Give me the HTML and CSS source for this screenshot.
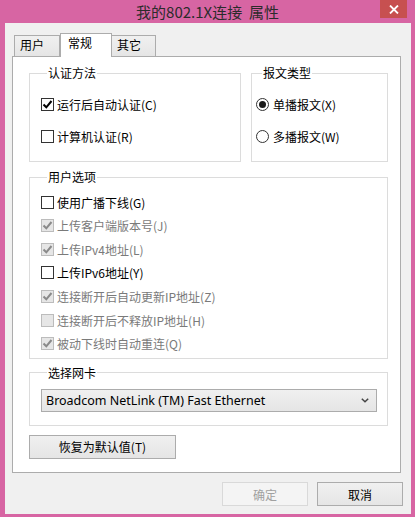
FILE: index.html
```html
<!DOCTYPE html>
<html lang="zh-CN">
<head>
<meta charset="utf-8">
<title>我的802.1X连接 属性</title>
<link rel="stylesheet" href="styles.css">
</head>
<body>
<div class="titlebar">
  <span class="title">我的802.1X连接&nbsp;&nbsp;属性</span>
  <span class="close"><svg width="10" height="9" viewBox="0 0 10 9"><path d="M1 0.5 L9 8.5 M9 0.5 L1 8.5" stroke="#fff" stroke-width="1.8" fill="none"/></svg></span>
</div>
<div class="client">
  <div class="tabs">
    <div class="tab t1">用户</div>
    <div class="tab active">常规</div>
    <div class="tab t3">其它</div>
  </div>
  <div class="panel">
    <div class="group-row">
      <fieldset class="grp auth">
        <legend>认证方法</legend>
        <div class="opts">
          <label class="opt"><span class="cb on"><svg width="11" height="11" viewBox="0 0 11 11"><path d="M1.5 5.5 L4.3 8.3 L9.5 2" stroke="#000" stroke-width="2" fill="none"/></svg></span>运行后自动认证(C)</label>
          <label class="opt"><span class="cb"></span>计算机认证(R)</label>
        </div>
      </fieldset>
      <fieldset class="grp pkt">
        <legend>报文类型</legend>
        <div class="opts">
          <label class="opt"><span class="rb on"><span class="dot"></span></span>单播报文(X)</label>
          <label class="opt"><span class="rb"></span>多播报文(W)</label>
        </div>
      </fieldset>
    </div>
    <fieldset class="grp user">
      <legend>用户选项</legend>
      <div class="opts list">
        <label class="opt"><span class="cb"></span>使用广播下线(G)</label>
        <label class="opt off"><span class="cb dis"><svg width="11" height="11" viewBox="0 0 11 11"><path d="M1.5 5.5 L4.3 8.3 L9.5 2" stroke="#8a8a8a" stroke-width="2" fill="none"/></svg></span>上传客户端版本号(J)</label>
        <label class="opt off"><span class="cb dis"><svg width="11" height="11" viewBox="0 0 11 11"><path d="M1.5 5.5 L4.3 8.3 L9.5 2" stroke="#8a8a8a" stroke-width="2" fill="none"/></svg></span>上传IPv4地址(L)</label>
        <label class="opt"><span class="cb"></span>上传IPv6地址(Y)</label>
        <label class="opt off"><span class="cb dis"><svg width="11" height="11" viewBox="0 0 11 11"><path d="M1.5 5.5 L4.3 8.3 L9.5 2" stroke="#8a8a8a" stroke-width="2" fill="none"/></svg></span>连接断开后自动更新IP地址(Z)</label>
        <label class="opt off"><span class="cb dis"></span>连接断开后不释放IP地址(H)</label>
        <label class="opt off"><span class="cb dis"><svg width="11" height="11" viewBox="0 0 11 11"><path d="M1.5 5.5 L4.3 8.3 L9.5 2" stroke="#8a8a8a" stroke-width="2" fill="none"/></svg></span>被动下线时自动重连(Q)</label>
      </div>
    </fieldset>
    <fieldset class="grp nic">
      <legend>选择网卡</legend>
      <div class="select">
        <span class="sel-text">Broadcom NetLink (TM) Fast Ethernet</span>
        <svg width="8" height="5" viewBox="0 0 8 5"><path d="M0.8 0.8 L4 3.8 L7.2 0.8" stroke="#444" stroke-width="1.5" fill="none"/></svg>
      </div>
    </fieldset>
    <button class="btn reset">恢复为默认值(T)</button>
  </div>
  <div class="actions">
    <button class="btn dlg disabled">确定</button>
    <button class="btn dlg">取消</button>
  </div>
</div>
</body>
</html>
```
FILE: styles.css
```css
body {
  margin: 0;
  width: 415px;
  height: 517px;
  overflow: hidden;
  background: #d765a3;
  font-family: "Noto Sans CJK SC", "Noto Sans", sans-serif;
  font-size: 12px;
  color: #000;
}

.titlebar {
  height: 23px;
  display: flex;
  justify-content: center;
  align-items: center;
  position: relative;
}

.title {
  font-size: 15px;
  line-height: 23px;
  color: #2b2b2b;
}

.close {
  position: absolute;
  top: 0;
  right: 8px;
  width: 27px;
  height: 18px;
  background: #c75050;
  display: flex;
  align-items: center;
  justify-content: center;
}

.client {
  margin: 0 4px 0 5px;
  height: 491px;
  box-sizing: border-box;
  padding-top: 10px;
  background: #f0f0f0;
}

.tabs {
  display: flex;
  align-items: flex-end;
  height: 24px;
  margin-left: 9px;
  margin-bottom: -1px;
  position: relative;
  z-index: 1;
}

.tab {
  box-sizing: border-box;
  height: 21px;
  margin-bottom: 1px;
  border: 1px solid #acacac;
  border-bottom: none;
  background: linear-gradient(#f0f0f0, #e5e5e5);
  line-height: 18px;
}

.t1 {
  width: 46px;
  padding-left: 5px;
}

.active {
  width: 52px;
  height: 24px;
  margin-bottom: 0;
  padding-left: 7px;
  background: #fff;
  position: relative;
  z-index: 2;
}

.t3 {
  width: 45px;
  margin-left: -1px;
  padding-left: 5px;
}

.panel {
  box-sizing: border-box;
  width: 389px;
  height: 417px;
  margin-left: 7px;
  padding: 8px 12px 0 16px;
  border: 1px solid #acacac;
  background: #fff;
}

.group-row {
  display: flex;
  gap: 10px;
}

.grp {
  margin: 0;
  min-width: 0;
  box-sizing: border-box;
  border: 1px solid #dcdcdc;
  padding: 13px 0 15px 11px;
}

.grp legend {
  margin-left: 6px;
  padding: 0 1px;
  line-height: 16px;
}

.auth {
  width: 212px;
}

.pkt {
  width: 137px;
  padding-left: 4px;
}

.opts {
  display: flex;
  flex-direction: column;
  gap: 12px;
}

.opt {
  display: flex;
  align-items: center;
  gap: 3px;
  height: 20px;
  white-space: nowrap;
}

.cb {
  box-sizing: border-box;
  width: 13px;
  height: 13px;
  border: 1px solid #333;
  background: #fff;
  display: flex;
  align-items: center;
  justify-content: center;
  flex: none;
}

.cb.dis {
  border-color: #bcbcbc;
  background: #e6e6e6;
}

.rb {
  box-sizing: border-box;
  width: 13px;
  height: 13px;
  border: 1px solid #333;
  border-radius: 50%;
  background: #fff;
  display: flex;
  align-items: center;
  justify-content: center;
  flex: none;
  margin-right: 1px;
}

.dot {
  width: 7px;
  height: 7px;
  border-radius: 50%;
  background: #1a1a1a;
}

.off {
  color: #7a7a7a;
}

.user {
  width: 359px;
  margin-top: 7px;
  padding-top: 7px;
  padding-bottom: 4px;
}

.list {
  gap: 3.67px;
}

.nic {
  width: 359px;
  margin-top: 6px;
  padding-top: 8px;
  padding-bottom: 13px;
}

.select {
  box-sizing: border-box;
  width: 336px;
  height: 23px;
  border: 1px solid #acacac;
  background: linear-gradient(#f0f0f0, #e5e5e5);
  display: flex;
  align-items: center;
  justify-content: space-between;
  padding: 0 7px 0 4px;
}

.sel-text {
  font-family: "Noto Sans", sans-serif;
  font-size: 12.5px;
}

.btn {
  box-sizing: border-box;
  height: 24px;
  border: 1px solid #acacac;
  background: linear-gradient(#f0f0f0, #e5e5e5);
  font-family: "Noto Sans CJK SC", "Noto Sans", sans-serif;
  font-size: 12px;
  color: #000;
  padding: 0;
  border-radius: 0;
}

.reset {
  display: block;
  width: 147px;
  margin-top: 9px;
}

.actions {
  display: flex;
  justify-content: flex-end;
  gap: 9px;
  margin-top: 9px;
  padding-right: 8px;
}

.dlg {
  width: 86px;
}

.disabled {
  border-color: #d9d9d9;
  background: #f4f4f4;
  color: #a0a0a0;
}
```
